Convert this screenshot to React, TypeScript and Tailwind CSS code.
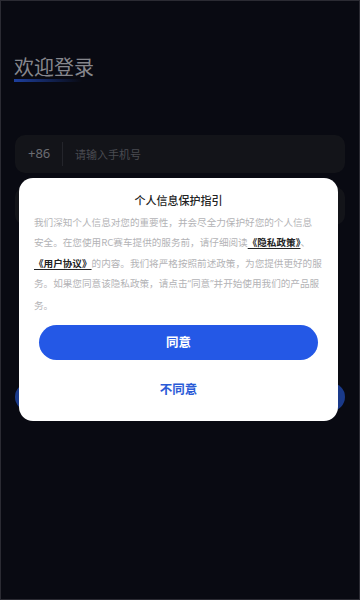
const cjk = { fontFamily: '"Noto Sans CJK SC", "Noto Sans", sans-serif' };
const latin = { fontFamily: '"Noto Sans", "Noto Sans CJK SC", sans-serif' };

const PhoneRow = () => (
  <div className="mx-[14px] h-[38px] rounded-[10px] bg-[#131419] flex items-center">
    <span style={latin} className="pl-[13px] w-[47px] text-[13px] text-[#6b6c72]">+86</span>
    <div className="w-px h-[24px] bg-[#24252b]" />
    <span className="pl-[12px] text-[11px] text-[#4a4b51]">请输入手机号</span>
  </div>
);

const Link = ({ children }: { children: string }) => (
  <span className="font-bold text-[#222] underline underline-offset-2">{children}</span>
);

const PrivacyModal = () => (
  <div className="absolute inset-0 flex items-start justify-start pl-[18px] pt-[177px]">
    <div className="w-[319px] rounded-[14px] bg-white pt-[14px] pb-[12px] px-[15px]">
      <div className="h-[16px] leading-[16px] text-center text-[11px] font-medium text-[#222]">个人信息保护指引</div>
      <div className="mt-[4px] text-[9.6px] leading-[20.4px] text-[#b3b3b6] whitespace-nowrap">
        <div>我们深知个人信息对您的重要性，并会尽全力保护好您的个人信息</div>
        <div>安全。在您使用RC赛车提供的服务前，请仔细阅读<Link>《隐私政策》</Link>、</div>
        <div><Link>《用户协议》</Link>的内容。我们将严格按照前述政策，为您提供更好的服</div>
        <div>
          务。如果您同意该隐私政策，请点击<span style={latin}>“</span>同意<span style={latin}>”</span>并开始使用我们的产品服
        </div>
        <div>务。</div>
      </div>
      <button className="mt-[10px] mx-[5px] w-[279px] h-[35px] rounded-full bg-[#2458e6] text-white text-[12.5px] font-semibold">
        同意
      </button>
      <div className="mt-[9px] h-[40px] flex items-center justify-center text-[12.5px] font-semibold text-[#2a5bd7]">
        不同意
      </div>
    </div>
  </div>
);

export default function App() {
  return (
    <div style={cjk} className="relative w-[360px] h-[600px] overflow-hidden bg-[#090a12] border border-[#2b2b33]">
      <div className="pt-[52px] px-[13px]">
        <div className="relative inline-block">
          <h1 className="relative z-10 text-[20px] leading-[28px] text-[#86878d]">欢迎登录</h1>
          <div className="absolute left-0 bottom-[-1px] w-[68px] h-[3px] bg-gradient-to-r from-[#1d3f9e] to-transparent" />
        </div>
      </div>
      <div className="mt-[54px]">
        <PhoneRow />
      </div>
      <div className="mt-[14px] mx-[14px] h-[38px] rounded-[10px] bg-[#131419]" />
      <div className="mt-[158px] mx-[14px] h-[28px] rounded-full bg-[#1a3a8a]" />
      <PrivacyModal />
    </div>
  );
}
